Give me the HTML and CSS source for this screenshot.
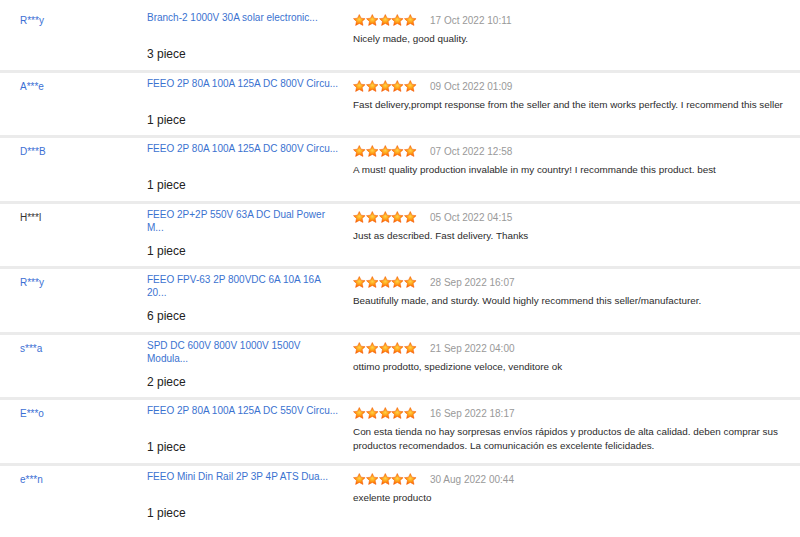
FILE: index.html
```html
<!DOCTYPE html>
<html>
<head>
<meta charset="utf-8">
<link rel="stylesheet" href="styles.css">
</head>
<body>
<svg class="defs" width="0" height="0" aria-hidden="true">
  <defs>
    <radialGradient id="sg" cx="0.5" cy="0.45" r="0.55">
      <stop offset="0" stop-color="#ffd24a"/>
      <stop offset="0.45" stop-color="#ffa41a"/>
      <stop offset="1" stop-color="#ff6200"/>
    </radialGradient>
    <symbol id="star" viewBox="0 0 24 24">
      <path d="M12 1l3.4 7 7.7.9-5.7 5.3 1.6 7.6L12 18l-7 3.8 1.6-7.6L.9 8.9l7.7-.9z" fill="url(#sg)" stroke="#f25a00" stroke-width="1" stroke-linejoin="round"/>
    </symbol>
  </defs>
</svg>
<div class="list">

  <div class="row">
    <div class="buyer">R***y</div>
    <div class="item">
      <a class="title" href="#">Branch-2 1000V 30A solar electronic...</a>
      <div class="qty">3 piece</div>
    </div>
    <div class="review">
      <div class="meta">
        <span class="stars"><svg><use href="#star"/></svg><svg><use href="#star"/></svg><svg><use href="#star"/></svg><svg><use href="#star"/></svg><svg><use href="#star"/></svg></span>
        <span class="date">17 Oct 2022 10:11</span>
      </div>
      <p class="text">Nicely made, good quality.</p>
    </div>
  </div>

  <div class="row">
    <div class="buyer">A***e</div>
    <div class="item">
      <a class="title" href="#">FEEO 2P 80A 100A 125A DC 800V Circu...</a>
      <div class="qty">1 piece</div>
    </div>
    <div class="review">
      <div class="meta">
        <span class="stars"><svg><use href="#star"/></svg><svg><use href="#star"/></svg><svg><use href="#star"/></svg><svg><use href="#star"/></svg><svg><use href="#star"/></svg></span>
        <span class="date">09 Oct 2022 01:09</span>
      </div>
      <p class="text">Fast delivery,prompt response from the seller and the item works perfectly. I recommend this seller</p>
    </div>
  </div>

  <div class="row">
    <div class="buyer">D***B</div>
    <div class="item">
      <a class="title" href="#">FEEO 2P 80A 100A 125A DC 800V Circu...</a>
      <div class="qty">1 piece</div>
    </div>
    <div class="review">
      <div class="meta">
        <span class="stars"><svg><use href="#star"/></svg><svg><use href="#star"/></svg><svg><use href="#star"/></svg><svg><use href="#star"/></svg><svg><use href="#star"/></svg></span>
        <span class="date">07 Oct 2022 12:58</span>
      </div>
      <p class="text">A must! quality production invalable in my country! I recommande this product. best</p>
    </div>
  </div>

  <div class="row">
    <div class="buyer dark">H***l</div>
    <div class="item">
      <a class="title" href="#">FEEO 2P+2P 550V 63A DC Dual Power M...</a>
      <div class="qty">1 piece</div>
    </div>
    <div class="review">
      <div class="meta">
        <span class="stars"><svg><use href="#star"/></svg><svg><use href="#star"/></svg><svg><use href="#star"/></svg><svg><use href="#star"/></svg><svg><use href="#star"/></svg></span>
        <span class="date">05 Oct 2022 04:15</span>
      </div>
      <p class="text">Just as described. Fast delivery. Thanks</p>
    </div>
  </div>

  <div class="row">
    <div class="buyer">R***y</div>
    <div class="item">
      <a class="title" href="#">FEEO FPV-63 2P 800VDC 6A 10A 16A 20...</a>
      <div class="qty">6 piece</div>
    </div>
    <div class="review">
      <div class="meta">
        <span class="stars"><svg><use href="#star"/></svg><svg><use href="#star"/></svg><svg><use href="#star"/></svg><svg><use href="#star"/></svg><svg><use href="#star"/></svg></span>
        <span class="date">28 Sep 2022 16:07</span>
      </div>
      <p class="text">Beautifully made, and sturdy. Would highly recommend this seller/manufacturer.</p>
    </div>
  </div>

  <div class="row">
    <div class="buyer">s***a</div>
    <div class="item">
      <a class="title" href="#">SPD DC 600V 800V 1000V 1500V Modula...</a>
      <div class="qty">2 piece</div>
    </div>
    <div class="review">
      <div class="meta">
        <span class="stars"><svg><use href="#star"/></svg><svg><use href="#star"/></svg><svg><use href="#star"/></svg><svg><use href="#star"/></svg><svg><use href="#star"/></svg></span>
        <span class="date">21 Sep 2022 04:00</span>
      </div>
      <p class="text">ottimo prodotto, spedizione veloce, venditore ok</p>
    </div>
  </div>

  <div class="row">
    <div class="buyer">E***o</div>
    <div class="item">
      <a class="title" href="#">FEEO 2P 80A 100A 125A DC 550V Circu...</a>
      <div class="qty">1 piece</div>
    </div>
    <div class="review">
      <div class="meta">
        <span class="stars"><svg><use href="#star"/></svg><svg><use href="#star"/></svg><svg><use href="#star"/></svg><svg><use href="#star"/></svg><svg><use href="#star"/></svg></span>
        <span class="date">16 Sep 2022 18:17</span>
      </div>
      <p class="text">Con esta tienda no hay sorpresas envíos rápidos y productos de alta calidad. deben comprar sus productos recomendados. La comunicación es excelente felicidades.</p>
    </div>
  </div>

  <div class="row">
    <div class="buyer">e***n</div>
    <div class="item">
      <a class="title" href="#">FEEO Mini Din Rail 2P 3P 4P ATS Dua...</a>
      <div class="qty">1 piece</div>
    </div>
    <div class="review">
      <div class="meta">
        <span class="stars"><svg><use href="#star"/></svg><svg><use href="#star"/></svg><svg><use href="#star"/></svg><svg><use href="#star"/></svg><svg><use href="#star"/></svg></span>
        <span class="date">30 Aug 2022 00:44</span>
      </div>
      <p class="text">exelente producto</p>
    </div>
  </div>

</div>
</body>
</html>
```

FILE: styles.css
```css
html, body {
  margin: 0;
  padding: 0;
  background: #ffffff;
}
body {
  font-family: "Liberation Sans", Arial, sans-serif;
  font-size: 10px;
  color: #2b2b2b;
  overflow: hidden;
}
.defs {
  position: absolute;
  width: 0;
  height: 0;
}
.list {
  padding-top: 7px;
}
.row {
  display: grid;
  grid-template-columns: 147px 205px 1fr;
  height: 62.5px;
  border-bottom: 3px solid #ebebeb;
}
.row:last-child {
  border-bottom: none;
}
.buyer {
  padding: 7px 0 0 20px;
  line-height: 13px;
  color: #3b6fd4;
}
.buyer.dark {
  color: #333333;
}
.item {
  padding-top: 4px;
  display: flex;
  flex-direction: column;
}
.title {
  display: block;
  width: 194px;
  height: 26px;
  line-height: 13px;
  color: #3a72d0;
  text-decoration: none;
}
.qty {
  margin-top: 10px;
  font-size: 12px;
  line-height: 14px;
  color: #222222;
}
.review {
  padding: 7px 10px 0 1px;
}
.meta {
  display: flex;
  align-items: center;
  height: 13px;
}
.stars {
  display: flex;
  gap: 0.2px;
  width: 77px;
}
.stars svg {
  width: 12.6px;
  height: 12.6px;
  display: block;
}
.date {
  color: #999999;
  font-size: 10px;
}
.text {
  margin: 5px 0 0;
  line-height: 14px;
  font-size: 9.9px;
}
```
